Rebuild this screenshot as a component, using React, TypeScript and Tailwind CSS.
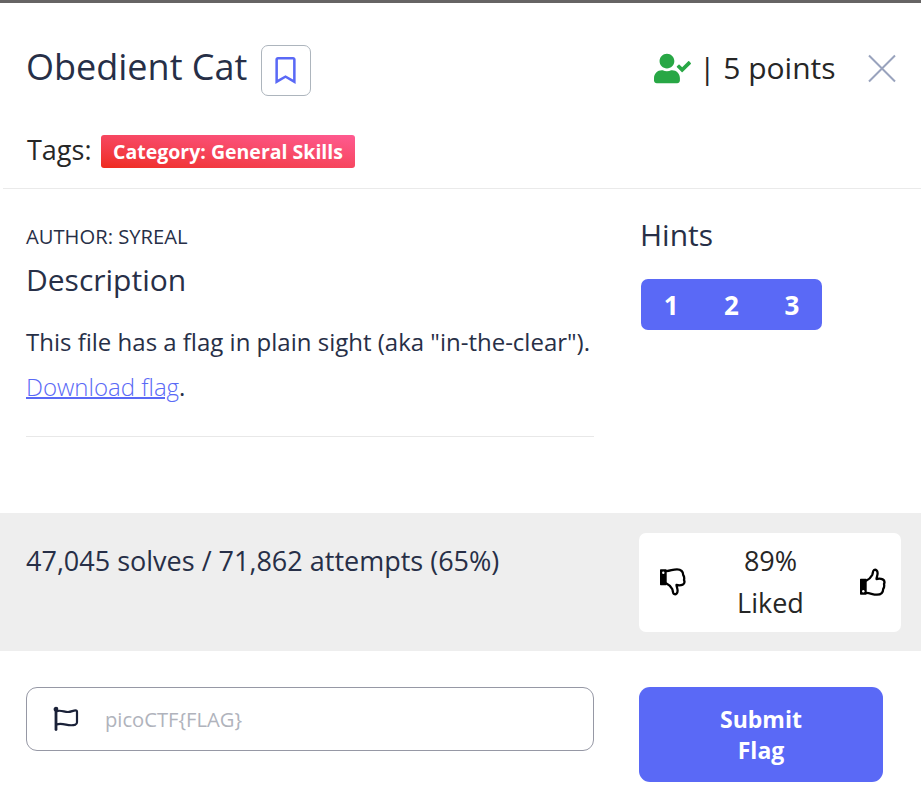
import { FaUserCheck, FaRegBookmark } from "react-icons/fa";

function Thumb({ down = false }: { down?: boolean }) {
  return (
    <svg
      className={down ? "-mt-px -scale-y-100" : "-mt-px"}
      width="27"
      height="28"
      viewBox="0 0 27 28"
      fill="none"
    >
      <path d="M1.700 11.500h5.300v14.500H1.700z" fill="#000" stroke="#000" strokeWidth="1.400" strokeLinejoin="round" />
      <circle cx="4.300" cy="23.200" r="1.200" fill="#fff" />
      <path
        d="M7.500 12.500c2.700-1.200 4.500-3.300 5.700-5.500.9-1.800.5-4.400 1.800-5 2-.8 3.600.8 3.600 3.200 0 2.200-1 3.900-1.100 5.800 2-.4 4.500-.4 6.200.4 2.200 1.100 2 3 1.300 4.600.5 2.200.1 3.800-.8 5-.1 3.800-1.700 5.700-6.200 5.700-4.200 0-6.400-1.600-10.500-1.800"
        stroke="#000"
        strokeWidth="2.300"
        strokeLinecap="round"
        strokeLinejoin="round"
      />
    </svg>
  );
}

function Flag() {
  return (
    <svg width="26" height="26" viewBox="0 0 26 26" fill="none" stroke="#1a2138" strokeWidth="2.200" strokeLinecap="round" strokeLinejoin="round">
      <path d="M3 3v20.500" strokeWidth="2.800" />
      <circle cx="3" cy="3.200" r="1.300" fill="#1a2138" />
      <path d="M3.500 5.200c4.500-1.500 7.500.8 11.500.8 3.300 0 5-1.600 7.500-1.600 1 0 1.500.5 1.500 1.400v10.500c0 1.200-.5 1.900-1.500 2.300-7.200 2.500-11.500-2.300-19-.2" />
    </svg>
  );
}

export default function App() {
  return (
    <div className="flex h-[790px] w-[921px] flex-col overflow-hidden border-t-3 border-[#666464] bg-white font-['Open_Sans',sans-serif] text-[#272f47]">
      <header className="ml-[3px] h-[186px] shrink-0 border-b border-[#eaeaea] pl-[23px]">
        <div className="flex h-[130px] items-start pt-[41px]">
          <h1 className="w-[235px] whitespace-nowrap text-[36px] leading-[46px]">Obedient Cat</h1>
          <button className="mt-[1px] flex h-[51px] w-[50px] items-center justify-center rounded-[7px] border border-[#adb5bd] text-[#5a69f6]">
            <FaRegBookmark className="mr-px" size={27} />
          </button>
          <FaUserCheck className="ml-[343px] mt-[6px] text-[#28a745]" size={37} />
          <span className="ml-[8px] w-[140px] whitespace-nowrap text-[30px] leading-[48px] text-[#262626]">| 5 points</span>
          <svg className="ml-[27px] mt-[9px]" width="30" height="30" viewBox="0 0 30 30" stroke="#99a3bd" strokeWidth="2">
            <path d="M3 2.500l26 26M29 2.500l-26 26" />
          </svg>
        </div>
        <div className="flex items-start">
          <span className="mt-px w-[75px] pl-[1px] text-[27px] leading-[32px] text-[#262626]">Tags:</span>
          <span className="mt-[2px] flex h-[33px] w-[254px] items-center justify-center rounded-[3px] bg-linear-to-tr from-[#ee2a1a] to-[#ff5a91] pt-px text-[19.500px] font-bold text-white">
            Category: General Skills
          </span>
        </div>
      </header>

      <main className="flex h-[324px] shrink-0 pl-[26px]">
        <section className="w-[568px]">
          <p className="mt-[33px] text-[20.200px] leading-[28px]">AUTHOR: SYREAL</p>
          <h2 className="mt-[10px] text-[30px] leading-[40px]">Description</h2>
          <p className="mt-[19px] whitespace-nowrap text-[24px] leading-[45px]">
            This file has a flag in plain sight (aka "in-the-clear").
          </p>
          <p className="text-[24px] leading-[45px]">
            <a href="#" className="font-light text-[#5a69f6] underline decoration-2">Download flag</a>.
          </p>
          <hr className="mt-[27px] border-[#e8e8e8]" />
        </section>
        <aside className="ml-[46px]">
          <h2 className="mt-[26px] text-[30px] leading-[40px]">Hints</h2>
          <div className="mt-[24px] ml-[1px] grid h-[51px] w-[181px] grid-cols-3 items-center rounded-[7px] bg-[#5a69f6] pt-px text-center text-[26px] font-bold text-white">
            <span>1</span><span>2</span><span>3</span>
          </div>
        </aside>
      </main>

      <section className="flex h-[138px] shrink-0 bg-[#eeeeee] pl-[26px]">
        <p className="w-[613px] pt-[27px] text-[27px] leading-[42px]">47,045 solves / 71,862 attempts (65%)</p>
        <div className="mt-[20px] flex h-[99px] w-[262px] items-center justify-between rounded-[7px] bg-white pr-[15px] pl-[20px]">
          <Thumb down />
          <p className="-mt-px mr-[4px] text-center text-[27px] leading-[42px] text-[#262626]">89%<br />Liked</p>
          <Thumb />
        </div>
      </section>

      <footer className="flex items-start pt-[36px] pl-[26px]">
        <label className="flex h-[64px] w-[568px] items-center rounded-[11px] border border-[#9698a5] pl-[26px]">
          <Flag />
          <span className="ml-[26px] pt-px text-[20.200px] text-[#b0b3bc]">{"picoCTF{FLAG}"}</span>
        </label>
        <button className="ml-[45px] h-[95px] w-[244px] rounded-[11px] bg-[#5a69f6] pt-px text-[23px] leading-[31px] font-bold text-white">
          Submit<br />Flag
        </button>
      </footer>
    </div>
  );
}
